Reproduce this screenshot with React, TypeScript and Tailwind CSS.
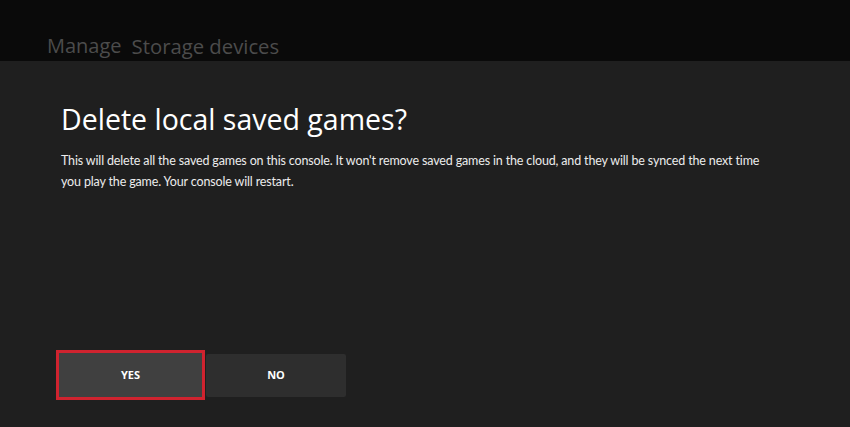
export default function App() {
  return (
    <div className="flex h-[427px] w-[850px] flex-col overflow-hidden bg-[#1f1f1f] font-['Open_Sans',sans-serif]">
      {/* Top bar with breadcrumb */}
      <header className="flex h-[61px] shrink-0 items-end bg-[#0a0a0a] pb-[5px] pl-[47px]">
        <span className="text-[20px] leading-none text-[#4c4c4c]">Manage</span>
        <span className="ml-[10px] text-[20.3px] leading-none text-[#4c4c4c]">
          Storage devices
        </span>
      </header>

      {/* Dialog body */}
      <main className="flex flex-1 flex-col pl-[61px]">
        <h1 className="mt-[40px] text-[28.5px] leading-[36px] text-white">
          Delete local saved games?
        </h1>
        <p className="mt-[13px] max-w-[712px] font-['Lato',sans-serif] text-[12.5px] leading-[21px] tracking-[-0.15px] text-[#ececec]">
          This will delete all the saved games on this console. It won't remove
          saved games in the cloud, and they will be synced the next time you
          play the game. Your console will restart.
        </p>

        <div className="mt-auto mb-[27px] -ml-[5px] flex items-center gap-[1px]">
          <button
            type="button"
            className="h-[50px] w-[149px] border-[3px] border-[#d0232f] bg-[#404040] text-[11px] font-bold text-white"
          >
            YES
          </button>
          <button
            type="button"
            className="h-[43px] w-[140px] rounded-[2px] bg-[#2e2e2e] text-[11px] font-bold text-white"
          >
            NO
          </button>
        </div>
      </main>
    </div>
  );
}
